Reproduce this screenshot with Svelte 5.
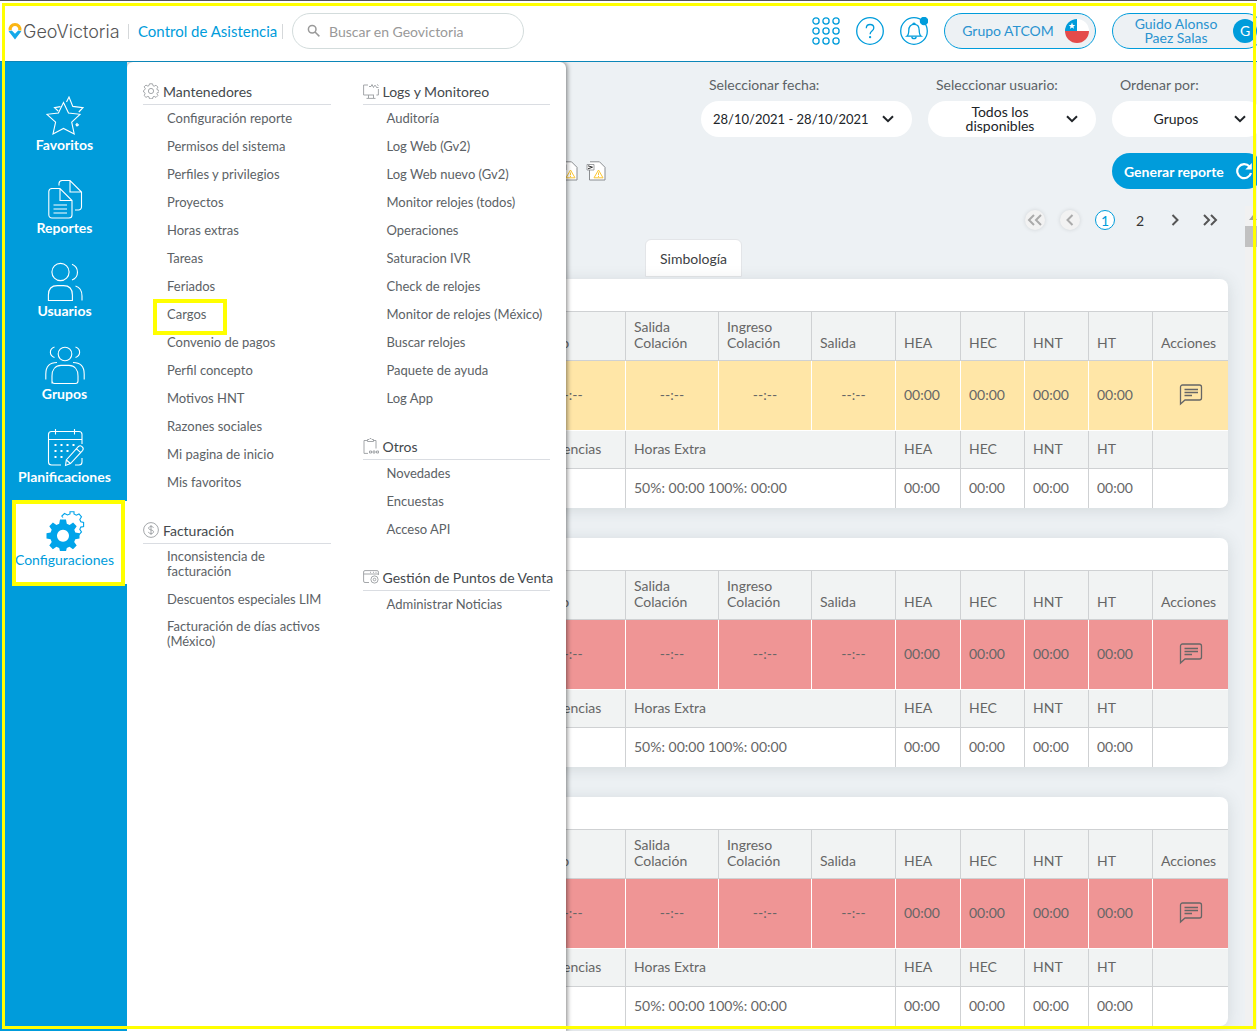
<script lang="ts">
  interface MenuSection {
    title: string;
    icon: string;
    items: string[];
  }

  interface Report {
    status: "pending" | "absent";
  }

  const navItems = [
    { label: "Favoritos", icon: "star" },
    { label: "Reportes", icon: "docs" },
    { label: "Usuarios", icon: "users" },
    { label: "Grupos", icon: "groups" },
    { label: "Planificaciones", icon: "calendar" },
    { label: "Configuraciones", icon: "gears" },
  ];

  const menuColumns: MenuSection[][] = [
    [
      {
        title: "Mantenedores",
        icon: "gear",
        items: [
          "Configuración reporte",
          "Permisos del sistema",
          "Perfiles y privilegios",
          "Proyectos",
          "Horas extras",
          "Tareas",
          "Feriados",
          "Cargos",
          "Convenio de pagos",
          "Perfil concepto",
          "Motivos HNT",
          "Razones sociales",
          "Mi pagina de inicio",
          "Mis favoritos",
        ],
      },
      {
        title: "Facturación",
        icon: "money",
        items: [
          "Inconsistencia de facturación",
          "Descuentos especiales LIM",
          "Facturación de días activos (México)",
        ],
      },
    ],
    [
      {
        title: "Logs y Monitoreo",
        icon: "monitor",
        items: [
          "Auditoría",
          "Log Web (Gv2)",
          "Log Web nuevo (Gv2)",
          "Monitor relojes (todos)",
          "Operaciones",
          "Saturacion IVR",
          "Check de relojes",
          "Monitor de relojes (México)",
          "Buscar relojes",
          "Paquete de ayuda",
          "Log App",
        ],
      },
      {
        title: "Otros",
        icon: "clipboard",
        items: ["Novedades", "Encuestas", "Acceso API"],
      },
      {
        title: "Gestión de Puntos de Venta",
        icon: "window",
        items: ["Administrar Noticias"],
      },
    ],
  ];

  const reports: Report[] = [
    { status: "pending" },
    { status: "absent" },
    { status: "absent" },
  ];

  const totals = ["HEA", "HEC", "HNT", "HT"];
  const dots = [4, 14, 24];

  let active = $state("Configuraciones");
  let page = $state(1);
  let order = $state("Grupos");
  let search = $state("");
</script>

{#snippet chevron()}
  <svg class="chevron" viewBox="0 0 12 8" aria-hidden="true"><path d="M1 1.2 6 6.2 11 1.2" /></svg>
{/snippet}

<div class="page">
  <header class="topbar">
    <div class="brand">
      <a class="logo" href="#inicio">
        <svg viewBox="0 0 14 18" width="14" height="18" aria-hidden="true">
          <path d="M2.2 8.4A4.9 4.9 0 1 1 11.8 8.4" fill="none" stroke="#fbb614" stroke-width="3.2" />
          <path d="M0.6 9.2 3.8 8.4 7 11.8 10.2 8.4 13.4 9.2 7 17.4Z" fill="#14a9e9" />
        </svg>
        <span>GeoVictoria</span>
      </a>
      <span class="divider"></span>
      <a class="module" href="#asistencia">Control de Asistencia</a>
      <span class="divider"></span>
      <label class="search">
        <svg viewBox="0 0 14 14" width="14" height="14" aria-hidden="true">
          <circle cx="5.2" cy="5.2" r="3.8" /><path d="M8 8 12.4 12.4" />
        </svg>
        <input type="text" placeholder="Buscar en Geovictoria" aria-label="Buscar" bind:value={search} />
      </label>
    </div>

    <div class="account">
      <button class="icon-button" aria-label="Aplicaciones">
        <svg viewBox="0 0 28 28" width="28" height="28">
          {#each dots as y}
            {#each dots as x}<circle cx={x} cy={y} r="3.1" />{/each}
          {/each}
        </svg>
      </button>
      <button class="icon-button" aria-label="Ayuda">
        <svg viewBox="0 0 28 28" width="28" height="28">
          <circle cx="14" cy="14" r="13.3" />
          <path d="M10.3 11.2c0-2.3 1.6-3.7 3.8-3.7s3.7 1.4 3.7 3.4c0 3.2-3.7 3.1-3.7 6.3" />
          <circle cx="14.1" cy="20.2" r="0.5" />
        </svg>
      </button>
      <button class="icon-button" aria-label="Notificaciones">
        <svg viewBox="0 0 28 28" width="28" height="28">
          <circle cx="14" cy="14" r="13.3" />
          <path d="M6.8 19.2c1.8-1.3 2-3 2-6 0-3.6 1.9-5.8 5.2-5.8s5.2 2.2 5.2 5.8c0 3 .2 4.7 2 6Z" />
          <path d="M12.8 7.4a1.2 1.2 0 0 1 2.4 0M11.8 19.6c.2 2.8 4.2 2.8 4.4 0" />
          <circle cx="24" cy="4" r="3.6" fill="#009cdb" />
        </svg>
      </button>
      <button class="account-pill">
        <span>Grupo ATCOM</span>
        <svg viewBox="0 0 24 24" width="24" height="24" aria-hidden="true">
          <path d="M12 0A12 12 0 0 1 24 12H12Z" fill="#fff" />
          <path d="M12 0A12 12 0 0 0 0 12H12Z" fill="#009cdb" />
          <path d="M0 12A12 12 0 0 0 24 12Z" fill="#e44b4b" />
          <path d="m7 3.6.9 2.3h2.4L8.4 7.4l.7 2.4L7 8.4 4.9 9.8l.7-2.4-1.9-1.5h2.4Z" fill="#fff" />
        </svg>
      </button>
      <button class="account-pill">
        <span>Guido Alonso Paez Salas</span>
        <span class="avatar">G</span>
      </button>
    </div>
  </header>

  <div class="body">
    <nav class="sidebar">
      {#each navItems as item}
        <button class="nav-item" class:active={active === item.label} onclick={() => (active = item.label)}>
          <svg viewBox="0 0 40 40" width="40" height="40" aria-hidden="true">
            {#if item.icon === "star"}
              <path d="M18.5 6.5 23.5 17 35 18.3 26.7 26.2 29.2 38 18.5 32.4 8 38 10.6 26.2 2 18.3 13.4 17Z" />
              <path d="M13.2 15 9.5 11.6 15.5 10.6M21.5 6 24 1 27.8 10.4 38 11.6 33.8 16" />
              <path d="M32 27.6 33.4 29 32 30 31 28.8Z" />
            {:else if item.icon === "docs"}
              <path d="M6 9.5H15L27 21.5V36a3 3 0 0 1-3 3H7a3.2 3.2 0 0 1-3.2-3.2V12.5A3.2 3.2 0 0 1 7 9.5ZM15 9.5V21.5H27" />
              <path d="M14 6.5V4.5A3.2 3.2 0 0 1 17 1.5H25L36.5 13V28a3 3 0 0 1-3 3H30M25 1.5V13H36.5M8.5 26H22M8.5 30H22M8.5 34H22" />
            {:else if item.icon === "users"}
              <circle cx="15.5" cy="10" r="8.6" />
              <path d="M3.4 38.5V33c0-6 3.5-9.4 9-9.4h6c5.5 0 9 3.4 9 9.4v5.5ZM27 2.2c7.3 3 7.3 13 0 15.8M30.5 24c4.5 1.4 6.5 5 6.5 10v4.5" />
            {:else if item.icon === "groups"}
              <circle cx="20" cy="9" r="6.8" />
              <path d="M7 38.5V31c0-6.5 3.5-10.6 9-10.6h8c5.5 0 9 4.1 9 10.6v5c0 1.6-1 2.5-2.5 2.5H9.5C8 38.5 7 37.6 7 36" />
              <path d="M9.5 2C4 4 4 10.5 9.5 12.5M30.5 2c5.5 2 5.5 8.5 0 10.5M12 17.5C4.5 17.5.8 21.5.8 29v5.5M28 17.5c7.5 0 11.2 4 11.2 11.5v5.5" />
            {:else if item.icon === "calendar"}
              <path d="M16 37H6.500a3 3 0 0 1-3-3V6.500a3 3 0 0 1 3-3H34a3 3 0 0 1 3 3V16M3.500 11.500H37M10.500 1V6.500M29.500 1V6.500M37 30v4a3 3 0 0 1-3 3h-4" />
              <path d="m20.500 37.500.8-5.500L33.500 18.500c2-2 6 1.200 4.200 3.800L25.500 35.500ZM31.500 20.800l4 3.600M21.300 32l4.200 3.500" />
              <path class="dotted" d="M9.500 17H32M9.500 23H24M9.500 29H20" />
            {:else}
              <path class="cog" fill-rule="evenodd" d="M15 8.500h6l.8 4.200 2.800 1.200 3.500-2.400 3.600 3.700-2.400 3.500 1 2.800 4.200.8v5.200l-4.200.8-1.100 2.800 2.500 3.500-3.700 3.600-3.500-2.400-2.700 1.100-.8 3.300h-6l-.8-3.300-2.800-1.100-3.500 2.400-3.600-3.600 2.400-3.500-1.100-2.800-4.100-.8v-5.200l4.100-.8 1.100-2.800-2.400-3.500 3.600-3.700 3.500 2.400 2.800-1.200ZM18 18.800a6 6 0 1 0 .01 0Z" />
              <path class="cog-line" d="M18 6.500 16.800 5 19.500 2.500 22.500 4 25 3V.8h4V3l2.300 1.200L34 3l2.500 2.800-1.700 2.700 1 2.300 2.800.7v4l-2.800.6-1 2.300 1.700 2.500-2.500 2.800-1.800-1" />
            {/if}
          </svg>
          <span>{item.label}</span>
        </button>
      {/each}
    </nav>

    <div class="menu-panel">
      {#each menuColumns as column}
        <div class="menu-column">
          {#each column as section}
            <section class="menu-section">
              <h2>
                <svg viewBox="0 0 16 16" width="16" height="16" aria-hidden="true">
                  {#if section.icon === "gear"}
                    <circle cx="8" cy="8" r="2.6" />
                    <path d="M6.5.8h3l.5 1.900 1.200.5 1.800-1 1.900 1.900-1 1.700.5 1.200 1.800.5v1.500l-1.800.5-.5 1.200 1 1.800-1.900 1.900-1.800-1-1.200.5-.5 1.900h-3L6 13.900l-1.200-.5-1.800 1-1.900-1.900 1-1.800L1.600 9.500l-1-.5V7.500l1.200-.8.5-1.200-1.200-1.700L3 2.100l1.800 1L6 2.600Z" />
                  {:else if section.icon === "money"}
                    <circle cx="8" cy="8" r="7.4" />
                    <path d="M10.500 5.800c-.3-1.600-4.900-1.900-4.900.4 0 2.300 5 1.200 5 3.600 0 2.300-5 2.200-5.200.1M8 3v10" />
                  {:else if section.icon === "monitor"}
                    <path d="M5 2H.6v10H11M15.400 6v6h-2M5.500 12v3M10.500 12v3M3.500 15.400h9M6 3.500h2l1-2 1.500 3 1-2h1l1 2h2M14 1.500l1.500 1" />
                  {:else if section.icon === "clipboard"}
                    <path d="M4 2.500H1v12.900h4M10 2.500h3v8M4.500 1.500H6L7 .5h1l1 1h1.500v2h-6Z" />
                    <path d="M6.500 13h2v2h-2ZM10 13h2v2h-2ZM13.500 13h2v2h-2Z" />
                  {:else}
                    <path d="M6 13.500H2A1.400 1.400 0 0 1 .6 12V3A1.400 1.400 0 0 1 2 1.600h12A1.400 1.400 0 0 1 15.400 3v3M.6 5h14.800M7 3.300h1M10 3.300h1M12.500 3.300h1" />
                    <circle cx="11.5" cy="10.5" r="3.6" /><circle cx="11.5" cy="10.5" r="1.3" />
                  {/if}
                </svg>
                {section.title}
              </h2>
              <ul>
                {#each section.items as item}
                  <li class:marked={item === "Cargos"}><a href="#menu">{item}</a></li>
                {/each}
              </ul>
            </section>
          {/each}
        </div>
      {/each}
    </div>

    <main class="content">
      <div class="filters">
        <div class="field date">
          <label for="date">Seleccionar fecha:</label>
          <button id="date" class="picker">
            <span>28/10/2021 - 28/10/2021</span>
            {@render chevron()}
          </button>
        </div>
        <div class="field user">
          <label for="user">Seleccionar usuario:</label>
          <button id="user" class="picker">
            <span>Todos los disponibles</span>
            {@render chevron()}
          </button>
        </div>
        <div class="field order">
          <label for="order">Ordenar por:</label>
          <div class="picker">
            <select id="order" bind:value={order}>
              <option>Grupos</option>
            </select>
            {@render chevron()}
          </div>
        </div>
      </div>

      <div class="toolbar">
        <div class="exports">
          {#each ["Exportar", "Exportar detalle"] as label}
            <button aria-label={label}>
              <svg viewBox="0 0 20 20" width="20" height="20">
                <path d="M4 .8h9.500l5.500 5.500V19H3.500V3" fill="#fff" stroke="#8a8d90" />
                <path d="M1 3.500h7v5.500H1Z" fill="#fff" stroke="#8a8d90" stroke-width="0.8" />
                <path d="M2 4.800 6.500 6.200 2 7.800" fill="none" stroke="#333" />
                <path d="M12.500 9 17 16.800H8Z" fill="#fff" stroke="#fcc630" />
                <path d="M12.500 11.500v2.700M12.500 15v1" stroke="#fcc630" />
              </svg>
            </button>
          {/each}
        </div>
        <button class="generate">
          Generar reporte
          <svg viewBox="0 0 18 18" width="18" height="18" aria-hidden="true">
            <path d="M14.500 4.500A7 7 0 1 0 16 11" fill="none" stroke="#fff" stroke-width="2.2" />
            <path d="M16.800 1v6.500h-6.500Z" fill="#fff" />
          </svg>
        </button>
      </div>

      <div class="report">
        <div class="report-body">
          <div class="pagination">
            <button class="off" aria-label="Primera"><svg viewBox="0 0 16 12"><path d="M7 1 2 6l5 5M14 1 9 6l5 5" /></svg></button>
            <button class="off" aria-label="Anterior"><svg viewBox="0 0 16 12"><path d="M10.500 1l-5 5 5 5" /></svg></button>
            {#each [1, 2] as n}
              <button class:current={page === n} onclick={() => (page = n)}>{n}</button>
            {/each}
            <button aria-label="Siguiente"><svg viewBox="0 0 16 12"><path d="M5.500 1l5 5-5 5" /></svg></button>
            <button aria-label="Última"><svg viewBox="0 0 16 12"><path d="M2 1l5 5-5 5M9 1l5 5-5 5" /></svg></button>
          </div>

          <div class="tabs">
            <button>Simbología</button>
          </div>

          {#each reports as report}
            <div class="card">
              <table>
                <colgroup>
                  <col />
                  <col class="w-entry" />
                  <col class="w-break" />
                  <col class="w-break" />
                  <col class="w-exit" />
                  {#each totals as total}<col class="w-total" class:w-first={total === "HEA"} />{/each}
                  <col class="w-actions" />
                </colgroup>
                <thead>
                  <tr>
                    <th></th>
                    <th>Ingreso</th>
                    <th>Salida Colación</th>
                    <th>Ingreso Colación</th>
                    <th>Salida</th>
                    {#each totals as total}<th>{total}</th>{/each}
                    <th>Acciones</th>
                  </tr>
                </thead>
                <tbody>
                  <tr class="marks {report.status}">
                    <td></td>
                    {#each [0, 1, 2, 3] as _}<td class="mark">--:--</td>{/each}
                    {#each totals as _}<td>00:00</td>{/each}
                    <td class="mark">
                      <button aria-label="Comentarios">
                        <svg viewBox="0 0 24 22" width="24" height="22">
                          <path d="M1.500 20V3A2 2 0 0 1 3.500 1H20.500a2 2 0 0 1 2 2V14a2 2 0 0 1-2 2H6Z" />
                          <path d="M5.500 5.500H19M5.500 8.500H19M5.500 11.500H13" />
                        </svg>
                      </button>
                    </td>
                  </tr>
                  <tr class="subhead">
                    <td></td>
                    <td>Inasistencias</td>
                    <td colspan="3">Horas Extra</td>
                    {#each totals as total}<td>{total}</td>{/each}
                    <td></td>
                  </tr>
                  <tr class="summary">
                    <td></td>
                    <td></td>
                    <td colspan="3">50%: 00:00 100%: 00:00</td>
                    {#each totals as _}<td>00:00</td>{/each}
                    <td></td>
                  </tr>
                </tbody>
              </table>
            </div>
          {/each}
        </div>
        <div class="scrollbar"><span class="arrow"></span><span class="thumb"></span></div>
      </div>
    </main>
  </div>

  <div class="frame"></div>
</div>

<style>
  :global(body) {
    font-family: Lato, "Open Sans", sans-serif;
    font-size: 14px;
    color: #5c6266;
  }

  .page {
    display: flex;
    flex-direction: column;
    height: 100vh;
    overflow: hidden;
    position: relative;
    background: #edf1f4;
  }

  button,
  input,
  select {
    font: inherit;
    color: inherit;
    border: 0;
    padding: 0;
    background: none;
  }
  button {
    cursor: pointer;
  }
  a {
    color: inherit;
    text-decoration: none;
  }
  svg {
    display: block;
    flex: none;
  }

  /* Top bar */
  .topbar {
    box-sizing: border-box;
    height: 62px;
    flex: none;
    display: flex;
    align-items: center;
    justify-content: space-between;
    padding-left: 8px;
    background: #fff;
    border-top: 1px solid #555;
    border-bottom: 1px solid #0c86b8;
  }
  .brand,
  .account,
  .logo {
    display: flex;
    align-items: center;
  }
  .brand {
    gap: 9px;
  }
  .logo {
    gap: 1px;
    font-family: Inter, sans-serif;
    font-size: 18px;
    font-weight: 300;
    color: #555;
  }
  .logo span {
    width: 96px;
    white-space: nowrap;
  }
  .divider {
    width: 1px;
    height: 15px;
    background: #d5d8da;
  }
  .module {
    width: 135px;
    font-size: 15px;
    white-space: nowrap;
    color: #009cdb;
  }
  .search {
    box-sizing: border-box;
    display: flex;
    align-items: center;
    gap: 8px;
    width: 232px;
    height: 36px;
    padding: 0 14px;
    border: 1px solid #d3dcdc;
    border-radius: 18px;
  }
  .search svg {
    fill: none;
    stroke: #999;
    stroke-width: 1.5;
  }
  .search input {
    width: 100%;
    outline: 0;
  }
  .search input::placeholder {
    color: #999;
  }

  .account {
    gap: 16px;
    margin-right: -7px;
  }
  .icon-button svg {
    fill: none;
    stroke: #009cdb;
    stroke-width: 1.3;
  }
  .account-pill {
    box-sizing: border-box;
    display: flex;
    align-items: center;
    width: 152px;
    height: 36px;
    padding: 0 6px;
    border: 1px solid #009cdb;
    border-radius: 18px;
    background: #edf1f4;
    color: #2a93d0;
    line-height: 14px;
  }
  .account-pill span:first-child {
    flex: 1;
    padding: 0 10px;
  }
  .avatar {
    width: 24px;
    border-radius: 12px;
    background: #009cdb;
    color: #fff;
    line-height: 24px;
  }

  /* Sidebar */
  .body {
    flex: 1;
    min-height: 0;
    display: flex;
    position: relative;
  }
  .sidebar {
    box-sizing: border-box;
    width: 127px;
    flex: none;
    padding-top: 24px;
    background: #009cdb;
  }
  .nav-item {
    box-sizing: border-box;
    display: flex;
    flex-direction: column;
    align-items: center;
    width: 100%;
    height: 83px;
    padding: 10px 0 0 2px;
    color: #fff;
    font-weight: 700;
    line-height: 18px;
  }
  .nav-item svg {
    fill: none;
    stroke: #fff;
    stroke-width: 1.1;
  }
  .nav-item svg .dotted {
    stroke-width: 2;
    stroke-dasharray: 2 4;
  }
  .nav-item svg .cog {
    fill: #00a4ea;
    stroke: none;
  }
  .nav-item svg .cog-line {
    stroke: #00a4ea;
  }
  .nav-item.active {
    position: relative;
    background: linear-gradient(to right, #009cdb 14px, #fff 14px);
    color: #009cdb;
    font-weight: 400;
  }
  .nav-item.active::after {
    content: "";
    position: absolute;
    inset: -1px 2px -2px 12px;
    border: 4px solid #ff0;
  }

  /* Configuration menu */
  .menu-panel {
    box-sizing: border-box;
    position: absolute;
    left: 127px;
    top: 0;
    bottom: 0;
    width: 439px;
    z-index: 1;
    display: flex;
    gap: 32px;
    padding: 18px 16px;
    background: #fff;
    border-radius: 6px 6px 0 0;
    box-shadow: 1px 0 5px rgba(0, 0, 0, 0.5);
    clip-path: inset(0 -12px 0 0);
  }
  .menu-column {
    flex: 1;
    min-width: 0;
  }
  .menu-section {
    margin-bottom: 22px;
  }
  .menu-section h2 {
    box-sizing: border-box;
    display: flex;
    align-items: center;
    gap: 4px;
    height: 25px;
    margin: 0;
    padding-bottom: 2px;
    border-bottom: 1px solid #dadde2;
    font-size: 14px;
    font-weight: 400;
    white-space: nowrap;
    color: #44494d;
  }
  .menu-section h2 svg {
    fill: none;
    stroke: #9a9da0;
    stroke-width: 0.9;
  }
  .menu-section ul {
    margin: 0;
    padding: 0 0 0 24px;
    list-style: none;
    font-size: 13px;
  }
  .menu-section li {
    box-sizing: border-box;
    display: flex;
    align-items: center;
    min-height: 28px;
    padding: 5px 0 7px;
    line-height: 15px;
  }
  .menu-section .marked {
    position: relative;
  }
  .marked::after {
    content: "";
    position: absolute;
    left: -14px;
    top: -2px;
    width: 66px;
    height: 28px;
    border: 4px solid #ff0;
    pointer-events: none;
  }

  /* Filters */
  .content {
    flex: 1;
    min-width: 0;
    display: flex;
    flex-direction: column;
    padding: 14px 0 0 16px;
  }
  .filters {
    display: flex;
    justify-content: flex-end;
    gap: 16px;
    margin-right: -7px;
  }
  .field label {
    display: block;
    margin: 0 8px 7px;
    line-height: 18px;
    white-space: nowrap;
  }
  .picker {
    box-sizing: border-box;
    display: flex;
    align-items: center;
    width: 100%;
    height: 36px;
    padding: 0 18px 0 6px;
    border-radius: 18px;
    background: #fff;
    color: #202428;
    line-height: 14px;
  }
  .picker span,
  .picker select {
    flex: 1;
    padding: 0 12px;
    text-align: center;
  }
  .picker select {
    appearance: none;
    outline: 0;
  }
  .date {
    width: 211px;
  }
  .date .picker span {
    padding: 0 6px;
    font-size: 13px;
    text-align: left;
    white-space: nowrap;
  }
  .user {
    width: 168px;
  }
  .order {
    width: 152px;
  }
  .chevron {
    width: 12px;
    height: 8px;
    fill: none;
    stroke: #202428;
    stroke-width: 2;
  }

  .toolbar {
    display: flex;
    align-items: center;
    justify-content: space-between;
    margin: 16px -7px 0 0;
  }
  .exports {
    display: flex;
    gap: 8px;
    padding-left: 415px;
  }
  .generate {
    display: flex;
    align-items: center;
    justify-content: space-between;
    box-sizing: border-box;
    width: 152px;
    height: 36px;
    padding: 0 11px 0 12px;
    border-radius: 18px;
    background: #009cdb;
    color: #fff;
    font-weight: 700;
  }

  /* Report */
  .report {
    flex: 1;
    min-height: 0;
    display: flex;
    margin-top: 17px;
  }
  .report-body {
    flex: 1;
    min-width: 0;
    padding: 4px 17px 0 0;
  }
  .pagination {
    display: flex;
    justify-content: flex-end;
    gap: 15px;
    margin: 0 8px 9px 0;
  }
  .pagination button {
    box-sizing: border-box;
    display: flex;
    align-items: center;
    justify-content: center;
    width: 20px;
    height: 20px;
    border-radius: 10px;
    color: #333;
  }
  .pagination .off {
    background: #f2f2f2;
    box-shadow: 0 0 4px rgba(0, 0, 0, 0.12);
  }
  .pagination .current {
    border: 1px solid #009cdb;
    background: #fff;
    color: #009cdb;
  }
  .pagination svg {
    width: 16px;
    height: 12px;
    fill: none;
    stroke: #555;
    stroke-width: 2;
  }
  .pagination .off svg {
    stroke: #aaa;
  }
  .tabs {
    padding-left: 502px;
    margin-bottom: 2px;
  }
  .tabs button {
    box-sizing: border-box;
    display: block;
    width: 97px;
    height: 38px;
    border: 1px solid #e3e5e8;
    border-radius: 6px 6px 0 0;
    background: #fff;
    color: #3c4043;
  }

  .card {
    margin-bottom: 30px;
    padding-top: 32px;
    overflow: hidden;
    border-radius: 8px;
    background: #fff;
    box-shadow: 0 2px 16px rgba(60, 80, 90, 0.15);
  }
  table {
    width: 100%;
    table-layout: fixed;
    border-spacing: 0;
    color: #666;
  }
  .w-entry {
    width: 110px;
  }
  .w-break {
    width: 93px;
  }
  .w-exit {
    width: 84px;
  }
  .w-total {
    width: 64px;
  }
  .w-first {
    width: 65px;
  }
  .w-actions {
    width: 76px;
  }
  th,
  td {
    box-sizing: border-box;
    padding: 0 8px 2px;
    border-left: 1px solid #cfd1d3;
    text-align: left;
    font-weight: 400;
    line-height: 16px;
  }
  th {
    height: 50px;
    padding-bottom: 9px;
    border-top: 1px solid #cfd1d3;
    border-bottom: 1px solid #cfd1d3;
    background: #f1f3f3;
    vertical-align: bottom;
  }
  .marks td {
    height: 70px;
    border-left-color: #fff;
    border-bottom: 1px solid #fff;
  }
  .pending td {
    background: #ffe6a7;
  }
  .absent td {
    background: #ef9595;
  }
  td.mark {
    text-align: center;
  }
  .mark button {
    display: block;
    margin: 0 auto;
  }
  .mark svg {
    fill: none;
    stroke: #666;
    stroke-width: 1.3;
  }
  .subhead td {
    height: 38px;
    border-bottom: 1px solid #cfd1d3;
    background: #f1f3f3;
  }
  .summary td {
    height: 39px;
  }

  .scrollbar {
    width: 12px;
    flex: none;
    background: #f1f1f1;
  }
  .arrow,
  .thumb {
    display: block;
  }
  .arrow {
    height: 5px;
    margin: 9px 0 6px 4px;
    background: #a0a0a0;
    clip-path: polygon(50% 0, 100% 100%, 0 100%);
  }
  .thumb {
    height: 21px;
    background: #c1c1c1;
  }

  /* Highlight around the whole window */
  .frame {
    position: absolute;
    inset: 3px 1px 2px 2px;
    z-index: 2;
    border: 3px solid #ff0;
    pointer-events: none;
  }
</style>
